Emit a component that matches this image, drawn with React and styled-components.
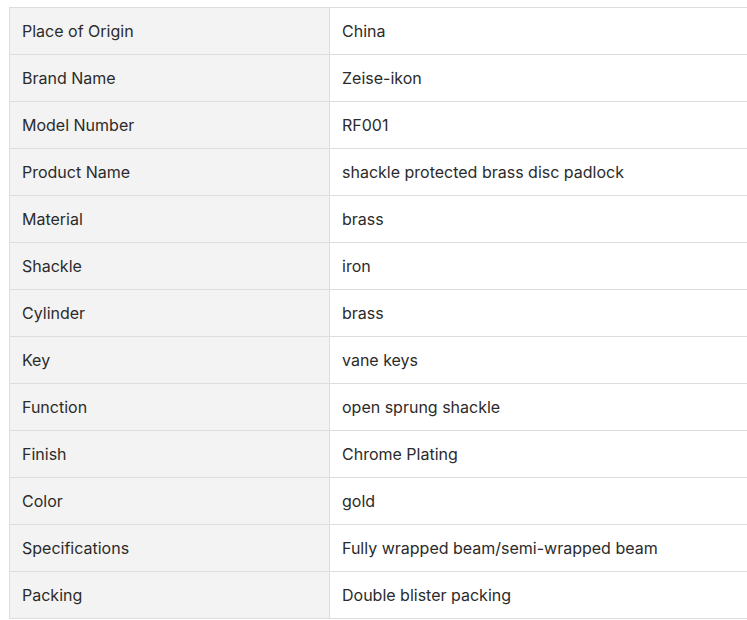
import React from "react";
import styled, { createGlobalStyle } from "styled-components";

const rows = [
  ["Place of Origin", "China"],
  ["Brand Name", "Zeise-ikon"],
  ["Model Number", "RF001"],
  ["Product Name", "shackle protected brass disc padlock"],
  ["Material", "brass"],
  ["Shackle", "iron"],
  ["Cylinder", "brass"],
  ["Key", "vane keys"],
  ["Function", "open sprung shackle"],
  ["Finish", "Chrome Plating"],
  ["Color", "gold"],
  ["Specifications", "Fully wrapped beam/semi-wrapped beam"],
  ["Packing", "Double blister packing"],
];

const GlobalStyle = createGlobalStyle`
  body {
    margin: 0;
    background: #ffffff;
    font-family: Inter, "Liberation Sans", sans-serif;
    overflow: hidden;
  }
`;

const Page = styled.div`
  padding: 7px 0 0 9px;
`;

const Table = styled.div`
  display: grid;
  grid-template-columns: 320px 440px;
  width: 760px;
  border-top: 1px solid #dddddd;
  border-left: 1px solid #dddddd;
`;

const Cell = styled.div`
  height: 46px;
  display: flex;
  align-items: center;
  padding-left: 12px;
  font-size: 16px;
  color: #2b2b2b;
  background: ${(p) => (p.$label ? "#f3f3f3" : "#ffffff")};
  border-right: 1px solid #dddddd;
  border-bottom: 1px solid #dddddd;
`;

export default function App() {
  return (
    <Page>
      <GlobalStyle />
      <Table>
        {rows.map(([k, v]) => (
          <React.Fragment key={k}>
            <Cell $label>{k}</Cell>
            <Cell>{v}</Cell>
          </React.Fragment>
        ))}
      </Table>
    </Page>
  );
}
